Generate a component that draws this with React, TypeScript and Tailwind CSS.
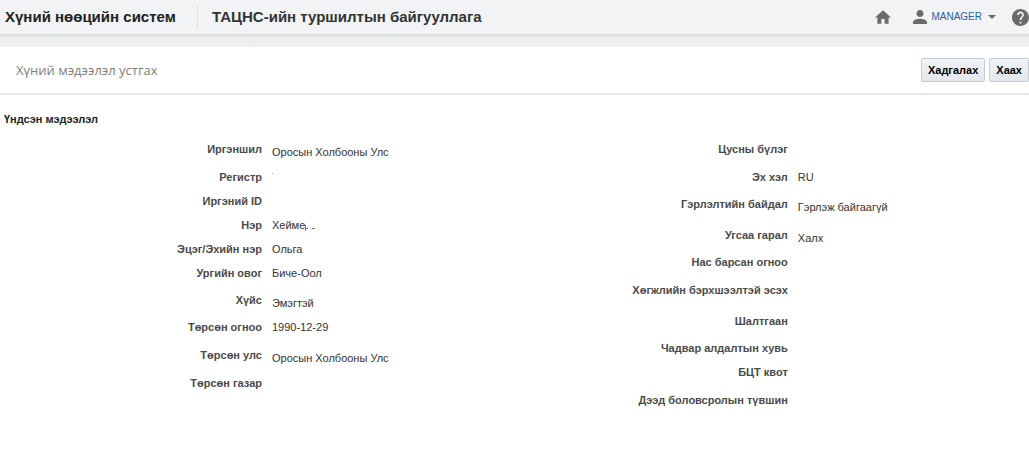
import React from "react";

type Field = { label: string; value?: string; lowered?: boolean; height: string; trace?: "dot" | "cut" };

const personal: Field[] = [
  { label: "Иргэншил", value: "Оросын Холбооны Улс", lowered: true, height: "h-7" },
  { label: "Регистр", height: "h-6", trace: "dot" },
  { label: "Иргэний ID", height: "h-6" },
  { label: "Нэр", value: "Хейме", height: "h-6", trace: "cut" },
  { label: "Эцэг/Эхийн нэр", value: "Ольга", height: "h-6" },
  { label: "Ургийн овог", value: "Биче-Оол", height: "h-[27px]" },
  { label: "Хүйс", value: "Эмэгтэй", lowered: true, height: "h-[27px]" },
  { label: "Төрсөн огноо", value: "1990-12-29", height: "h-7" },
  { label: "Төрсөн улс", value: "Оросын Холбооны Улс", lowered: true, height: "h-7" },
  { label: "Төрсөн газар", height: "h-6" },
];

const additional: Field[] = [
  { label: "Цусны бүлэг", height: "h-7" },
  { label: "Эх хэл", value: "RU", height: "h-[27px]" },
  { label: "Гэрлэлтийн байдал", value: "Гэрлэж байгаагүй", lowered: true, height: "h-[31px]" },
  { label: "Угсаа гарал", value: "Халх", lowered: true, height: "h-[27px]" },
  { label: "Нас барсан огноо", height: "h-7" },
  { label: "Хөгжлийн бэрхшээлтэй эсэх", height: "h-[31px]" },
  { label: "Шалтгаан", height: "h-[27px]" },
  { label: "Чадвар алдалтын хувь", height: "h-6" },
  { label: "БЦТ квот", height: "h-7" },
  { label: "Дээд боловсролын түвшин", height: "h-6" },
];

function Trace({ kind }: { kind: "dot" | "cut" }) {
  return kind === "dot" ? (
    <svg className="h-4 w-4" viewBox="0 0 16 16" aria-hidden="true">
      <path d="M0 4h1v1H0z" fill="#c9a58a" />
    </svg>
  ) : (
    <svg className="h-4 w-4" viewBox="0 0 16 16" aria-hidden="true">
      <path d="M0 8h1v6H0zM1 11h2v1H1zM7 11h3v1H7z" fill="#777" />
    </svg>
  );
}

function FieldList({ fields }: { fields: Field[] }) {
  return (
    <dl>
      {fields.map((f) => (
        <div key={f.label} className={`flex items-start gap-[10px] ${f.height}`}>
          <dt className="w-[262px] shrink-0 text-right font-bold text-[#4a4a4a]">{f.label}</dt>
          <dd className={`flex whitespace-nowrap text-[#333] ${f.lowered ? "pt-[3px]" : ""}`}>
            {f.value}
            {f.trace && <Trace kind={f.trace} />}
          </dd>
        </div>
      ))}
    </dl>
  );
}

const actionClass =
  "h-6 shrink-0 rounded-[2px] border border-[#c4ced7] bg-linear-to-b from-[#f1f3f5] to-[#e3e8ec] px-[6px] text-[11px] leading-4 font-bold text-black";

export default function App() {
  return (
    <div className="overflow-x-hidden bg-white font-['Liberation_Sans',Arial,sans-serif] text-[11px] leading-4">
      <header className="flex h-[34px] items-center bg-[#f1f3f5] text-[15px] leading-6 font-bold whitespace-nowrap text-[#222]">
        <h1 className="min-w-[198px] border-r border-[#d9e0e6] pl-[5px]">Хүний нөөцийн систем</h1>
        <h2 className="pl-[14px] text-[#333]">ТАЦНС-ийн туршилтын байгууллага</h2>
        <nav className="ml-auto flex items-center font-normal">
          <a href="#home" aria-label="Нүүр" className="mr-[22px]">
            <svg className="h-[14px] w-4" viewBox="2 3 20 17" fill="#6b6b6b" aria-hidden="true">
              <path d="M10 20v-6h4v6h5v-8h3L12 3 2 12h3v8z" />
            </svg>
          </a>
          <button type="button" className="mr-4 flex items-center text-[10px] text-[#2561a8]">
            <svg className="mr-1 h-[14px] w-[14px]" viewBox="4 4 16 16" fill="#6b6b6b" aria-hidden="true">
              <path d="M12 12c2.200 0 4-1.800 4-4s-1.800-4-4-4-4 1.800-4 4 1.800 4 4 4zm0 2c-2.700 0-8 1.300-8 4v2h16v-2c0-2.700-5.300-4-8-4z" />
            </svg>
            MANAGER
            <svg className="ml-[6px] h-1 w-2" viewBox="0 0 8 4" fill="#6b6b6b" aria-hidden="true">
              <path d="M0 0h8L4 4z" />
            </svg>
          </button>
          <a href="#help" aria-label="Тусламж">
            <svg className="h-[17px] w-[17px]" viewBox="2 2 20 20" fill="#6b6b6b" aria-hidden="true">
              <path d="M12 2C6.480 2 2 6.480 2 12s4.480 10 10 10 10-4.480 10-10S17.520 2 12 2zm1 17h-2v-2h2v2zm2.070-7.750l-.9.920C13.450 12.900 13 13.500 13 15h-2v-.5c0-1.100.45-2.100 1.170-2.830l1.240-1.260c.37-.36.59-.86.59-1.410 0-1.100-.9-2-2-2s-2 .9-2 2H8c0-2.210 1.790-4 4-4s4 1.790 4 4c0 .88-.36 1.680-.93 2.250z" />
            </svg>
          </a>
        </nav>
      </header>
      <div className="h-[13px] bg-linear-to-b from-[#d8dbdb] via-[#ebecec] via-30% to-[#f0f0f0]" />
      <main>
        <div className="flex h-12 items-center gap-1 border-b-2 border-[#e3e7ed] pl-4">
          <h2 className="mr-auto font-['Open_Sans',sans-serif] text-[13px] leading-5 text-[#808080]">Хүний мэдээлэл устгах</h2>
          <button type="button" className={actionClass}>Хадгалах</button>
          <button type="button" className={actionClass}>Хаах</button>
        </div>
        <h3 className="pt-4 pl-1 font-bold text-[#222]">Үндсэн мэдээлэл</h3>
        <div className="grid grid-cols-[511fr_489fr] pt-[14px]">
          <FieldList fields={personal} />
          <FieldList fields={additional} />
        </div>
      </main>
    </div>
  );
}
